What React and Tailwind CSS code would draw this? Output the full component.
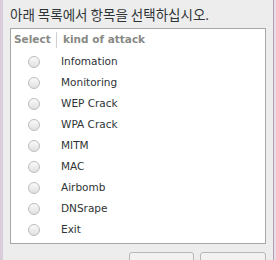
const items = ['Infomation', 'Monitoring', 'WEP Crack', 'WPA Crack', 'MITM', 'MAC', 'Airbomb', 'DNSrape', 'Exit']

function Radio() {
  return (
    <span className="block h-[12px] w-[12px] rounded-full border border-[#bcbcbc] bg-gradient-to-b from-[#fafafa] to-[#e0e0e0]" />
  )
}

export default function App() {
  return (
    <div className="flex h-[260px] w-[276px] overflow-hidden bg-[#ededed] font-['DejaVu_Sans',sans-serif] text-[#2e3436]">
      <div className="w-[3px] shrink-0 bg-[#d8cdd8]" />
      <div className="flex min-w-0 flex-1 flex-col">
        <div className="h-[28px] shrink-0 pl-[7px] pt-[4px] font-['Noto_Sans_CJK_KR',sans-serif] text-[13.5px] leading-[20px]">
          아래 목록에서 항목을 선택하십시오.
        </div>
        <div className="mx-[7px] h-[216px] shrink-0 border border-[#a8a8a8] bg-white">
          <div className="flex h-[22px] items-center text-[10.5px] font-bold text-[#888a85]">
            <div className="w-[46px] border-r border-[#d0d0d0] pl-[3px]">Select</div>
            <div className="pl-[6px]">kind of attack</div>
          </div>
          {items.map((it) => (
            <div key={it} className="flex h-[21px] items-center text-[10.5px]">
              <div className="flex w-[46px] justify-center">
                <Radio />
              </div>
              <div className="pl-[4px]">{it}</div>
            </div>
          ))}
        </div>
        <div className="mt-[8px] flex shrink-0 justify-end gap-[6px] pr-[7px]">
          <div className="h-[20px] w-[65px] rounded-t-[3px] border border-[#b8b8b8] bg-[#f2f2f2]" />
          <div className="h-[20px] w-[66px] rounded-t-[3px] border border-[#b8b8b8] bg-[#f2f2f2]" />
        </div>
      </div>
      <div className="w-[3px] shrink-0 border-l border-[#b89cb8] bg-[#e6dde6]" />
    </div>
  )
}
